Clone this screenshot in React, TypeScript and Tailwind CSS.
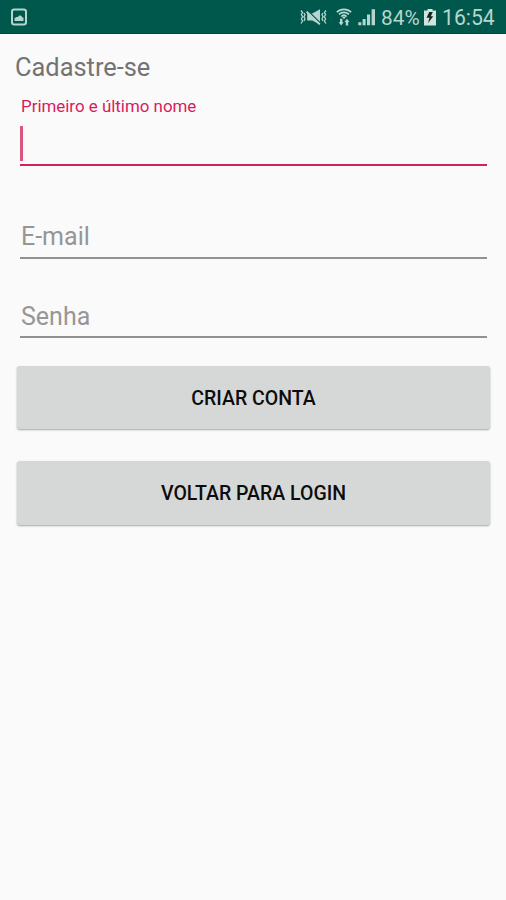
import { ReactNode } from 'react';

interface IFieldProps {
  label: string;
  className?: string;
}

interface IButtonProps {
  children: ReactNode;
  className?: string;
}

function PictureIcon() {
  return (
    <svg className="h-[18px] w-4" viewBox="0 0 16 18" fill="none">
      <rect x="1" y="1.5" width="14" height="15" rx="2.2" stroke="#b5d6cf" strokeWidth="2" />
      <path d="M3.5 13V10.2l2-1.1h1.3l1.5-1.5h1.5l1.5 1.6 1.2.5V13z" fill="#b5d6cf" />
    </svg>
  );
}

function VibrateMuteIcon() {
  return (
    <svg className="h-[18px] w-[27px]" viewBox="0 0 27 18" fill="none">
      <path
        d="M1 2.5l1.6 2-1.2 2 1.2 2.3-1.2 2.2 1.2 2-1.6 2.5M4 5l1 1.6-1 2.2 1 2.2-1 2M26 2.5l-1.6 2 1.2 2-1.2 2.3 1.2 2.2-1.2 2 1.6 2.5M23 5l-1 1.6 1 2.2-1 2.2 1 2"
        stroke="#b5d6cf"
        strokeWidth="1.3"
      />
      <path d="M7.2 5.6h5L20 1.2v15.4l-7.8-4h-5z" fill="#b5d6cf" />
      <path d="M7.8 2.8l12.8 12.4" stroke="#00574b" strokeWidth="1.3" />
      <path d="M6.6 3.6l13.2 12.8" stroke="#b5d6cf" strokeWidth="2" />
    </svg>
  );
}

function WifiIcon() {
  return (
    <svg className="h-[18px] w-4" viewBox="0 0 16 18" fill="none">
      <path
        d="M.8 4.2C4.6.4 11.4.4 15.2 4.2M3 6.4c2.8-2.7 7.2-2.7 10 0M5.2 8.5c1.6-1.5 4-1.5 5.6 0"
        stroke="#b5d6cf"
        strokeWidth="1.6"
      />
      <path d="M5.8 8.6h4.4L8 11.2z" fill="#b5d6cf" />
      <path d="M4 10.8h2.4v3.4h1.2L5.2 17.4l-2.6-3.2H4zM9.8 17.4h2.4V14h1.3l-2.5-3.2L8.4 14h1.4z" fill="#b5d6cf" />
    </svg>
  );
}

function SignalIcon() {
  return (
    <svg className="h-[18px] w-[18px]" viewBox="0 0 18 18" fill="#b5d6cf">
      <path d="M.3 14.2h3v3H.3zM4.6 11h3v6.2h-3zM9 6.5h3.1v10.7H9zM13.6 1.2h3.4v16h-3.4z" />
    </svg>
  );
}

function BatteryIcon() {
  return (
    <svg className="h-[18px] w-3" viewBox="0 0 12 18">
      <path d="M3.5 1h5v1.6H12V17.5H0V2.6h3.5z" fill="#d1e4df" />
      <path d="M8.8 4H5.2L2.6 9.8h2.9L4 15.2l5.2-7H6.8z" fill="#15251f" />
    </svg>
  );
}

function StatusBar() {
  return (
    <div className="flex h-[34px] items-center border-b border-[#004b40] bg-[#00574b] pt-px pr-[11px] pl-[11px] text-[#b5d6cf]">
      <PictureIcon />
      <div className="ml-auto flex items-center">
        <VibrateMuteIcon />
        <span className="ml-[9px] flex">
          <WifiIcon />
        </span>
        <span className="ml-[6px] flex">
          <SignalIcon />
        </span>
        <span className="ml-[5px] w-10 pt-0.5 text-[20.8px] leading-6 whitespace-nowrap">84%</span>
        <span className="ml-[3px] flex">
          <BatteryIcon />
        </span>
        <span className="ml-[6px] w-[53px] pt-0.5 text-[21.2px] leading-6 whitespace-nowrap">16:54</span>
      </div>
    </div>
  );
}

function Field({ label, className }: IFieldProps) {
  return (
    <div className={`mr-[19px] ml-5 border-b-2 border-[#919191] ${className ?? ''}`}>
      <p className="pl-px text-[25px] leading-[30px] text-[#969696]">{label}</p>
    </div>
  );
}

function Button({ children, className }: IButtonProps) {
  return (
    <button
      className={`mr-4 ml-[17px] block w-[473px] rounded-[3px] bg-[#d6d8d7] pt-0.5 text-[19.5px] font-medium text-[#0c0c0c] shadow-[0_1px_2px_rgba(0,0,0,0.35)] ${className ?? ''}`}
    >
      {children}
    </button>
  );
}

export default function App() {
  return (
    <div className="h-[900px] w-[506px] overflow-hidden bg-[#fafafa] font-['Roboto',sans-serif]">
      <StatusBar />
      <h1 className="mt-[18px] ml-[15px] text-[25.4px] leading-[30px] text-[#737373]">Cadastre-se</h1>

      <div className="mt-[14px] mr-[19px] ml-5 border-b-2 border-[#cf2457]">
        <p className="pl-px text-[16.9px] leading-5 text-[#d81b60]">Primeiro e último nome</p>
        <div className="mt-[10px] mb-[3px] h-[35px] w-[3px] bg-[#d9577f]" />
      </div>

      <Field label="E-mail" className="mt-14 pb-[5px]" />
      <Field label="Senha" className="mt-[43px] pb-1" />

      <Button className="mt-7 h-[63px]">CRIAR CONTA</Button>
      <Button className="mt-8 h-16">VOLTAR PARA LOGIN</Button>
    </div>
  );
}
